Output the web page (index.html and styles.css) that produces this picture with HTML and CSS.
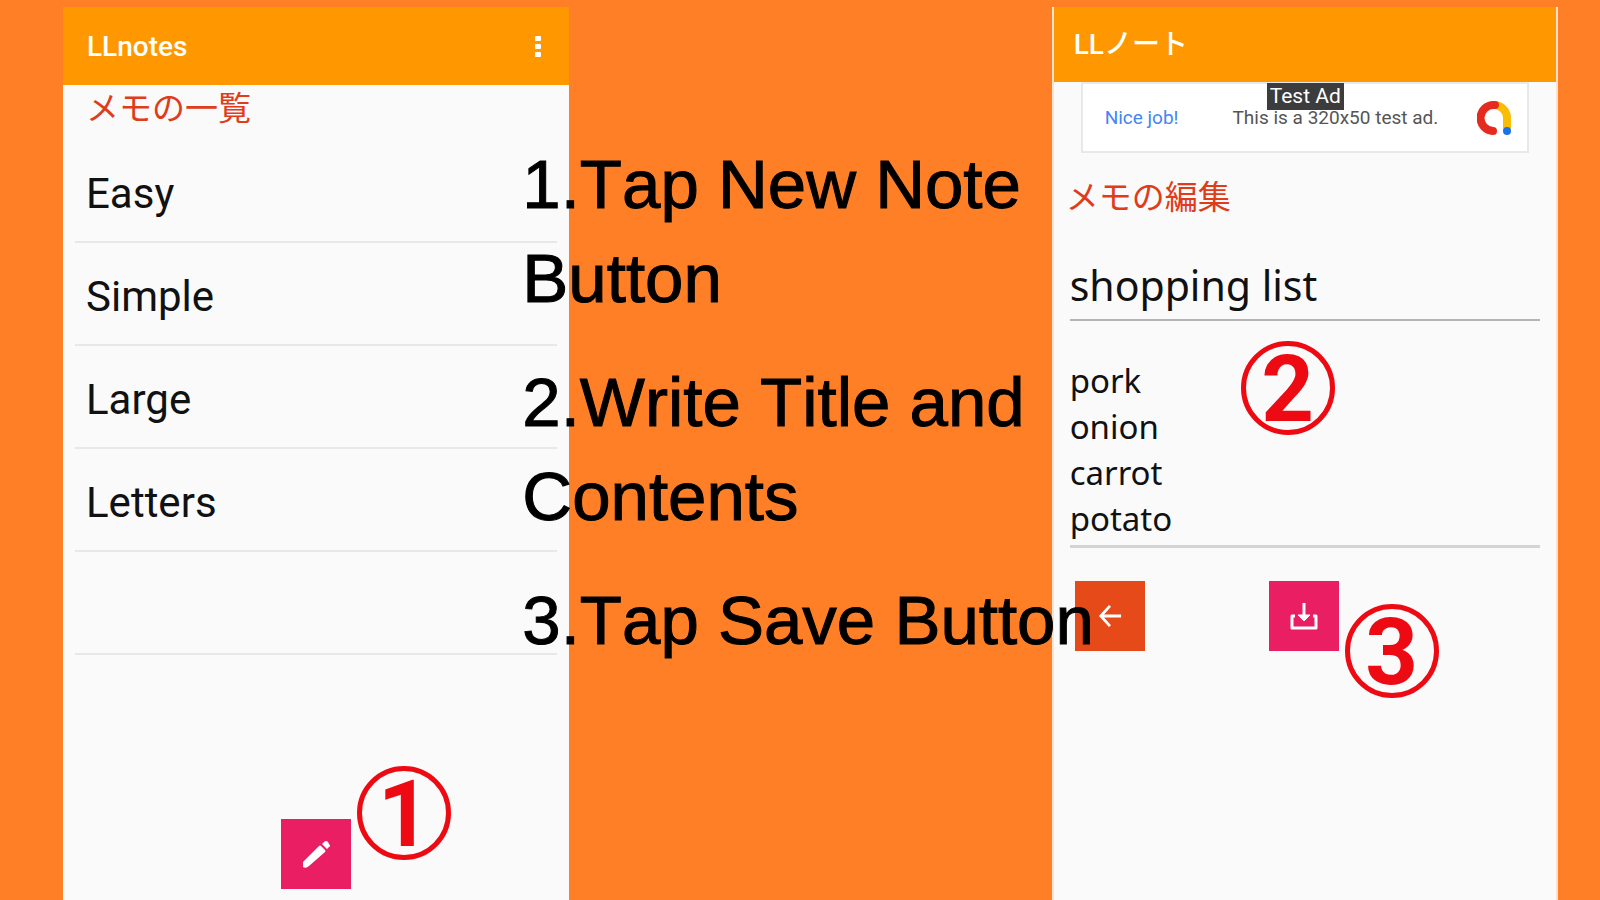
FILE: index.html
```html
<!DOCTYPE html>
<html lang="ja">
<head>
    <meta charset="UTF-8">
    <meta name="viewport" content="width=device-width, initial-scale=1.0">
    <title>LLnotes</title>
    <link rel="stylesheet" href="styles.css">
</head>
<body>

    <main class="page">
        <section class="phone">
            <header class="app-bar">
                <h1>LLnotes</h1>
                <button type="button" class="menu-btn" aria-label="Menu">
                    <svg width="6" height="22" viewBox="0 0 6 22" fill="#fff">
                        <rect x="0" y="0" width="6" height="5" rx="1"/>
                        <rect x="0" y="8" width="6" height="5" rx="1"/>
                        <rect x="0" y="16" width="6" height="5" rx="1"/>
                    </svg>
                </button>
            </header>
            <h2 class="list-title">メモの一覧</h2>
            <ul class="notes">
                <li><a href="#">Easy</a></li>
                <li><a href="#">Simple</a></li>
                <li><a href="#">Large</a></li>
                <li><a href="#">Letters</a></li>
                <li></li>
            </ul>
            <div class="new-note">
                <button type="button" class="icon-btn pink" aria-label="New note">
                    <svg width="32" height="32" viewBox="0 0 32 32" fill="#fff">
                        <path d="M3 24 L19 8 Q20 7 21 8 L25 12 Q26 13 25 14 L9 28 Q6 31 3 29 Z"/>
                        <path d="M22 6 L24 4 Q26 2 28 4 L29 6 Q31 8 29 9 L27 11 Z"/>
                    </svg>
                </button>
                <span class="step step-new">1</span>
            </div>
        </section>

        <ol class="guide">
            <li>1.Tap New Note Button</li>
            <li>2.Write Title and Contents</li>
            <li>3.Tap Save Button</li>
        </ol>

        <section class="phone phone-edit">
            <header class="app-bar">
                <h1>LLノート</h1>
            </header>
            <div class="ad">
                <span class="ad-label">Test Ad</span>
                <a href="#">Nice job!</a>
                <span class="ad-text">This is a 320x50 test ad.</span>
                <svg class="ad-logo" width="34" height="36" viewBox="0 0 34 36" fill="none" stroke-width="8" stroke-linecap="round">
                    <path d="M17 5 A13 13 0 0 1 30 18 V27" stroke="#fbbc04"/>
                    <path d="M18 5 H17 A13 13 0 0 0 16 31" stroke="#e52b20"/>
                    <circle cx="30" cy="31" r="4" fill="#1a73e8"/>
                </svg>
            </div>
            <form class="editor">
                <h2>メモの編集</h2>
                <input type="text" class="note-title" aria-label="Title" value="shopping list">
                <div class="note-body">
                    <textarea rows="4" aria-label="Contents">pork
onion
carrot
potato</textarea>
                    <span class="step step-write">2</span>
                </div>
                <div class="actions">
                    <button type="button" class="icon-btn red" aria-label="Back">
                        <svg width="24" height="24" viewBox="0 0 26 26" fill="none" stroke="#fff" stroke-width="3">
                            <path d="M25 13 H3 M13 2 L3 13 L13 24"/>
                        </svg>
                    </button>
                    <div class="save">
                        <button type="button" class="icon-btn pink" aria-label="Save">
                            <svg width="30" height="30" viewBox="0 0 30 30" fill="none" stroke="#fff" stroke-width="3" stroke-linejoin="round">
                                <path d="M6 15 H3 V27 H27 V15 H24"/>
                                <path d="M15 2 V17"/>
                                <path d="M9 14 L15 20 L21 14 Z" fill="#fff" stroke-width="1"/>
                            </svg>
                        </button>
                        <span class="step step-save">3</span>
                    </div>
                </div>
            </form>
        </section>
    </main>

</body>
</html>
```
FILE: styles.css
```css
* {
    box-sizing: border-box;
}
body {
    margin: 0;
    background-color: #ff7f27;
    font-family: Roboto, "Noto Sans CJK JP", sans-serif;
    color: #111;
}
h1, h2, ul, ol {
    margin: 0;
    padding: 0;
}
ul, ol {
    list-style: none;
}
.page {
    display: grid;
    grid-template-columns: 506fr 482fr 506fr;
    min-height: 100vh;
    padding: 7px 42px 0 63px;
}
.phone {
    display: flex;
    flex-direction: column;
    background-color: #fafafa;
}
.phone-edit {
    border: solid #fde3cf;
    border-width: 0 2px;
}
.app-bar {
    display: flex;
    justify-content: space-between;
    align-items: center;
    height: 78px;
    padding: 2px 24px 0;
    background-color: #ff9800;
}
.phone-edit .app-bar {
    height: 75px;
    padding: 0 20px;
}
.app-bar h1 {
    font-size: 28px;
    line-height: 32px;
    font-weight: 500;
    color: #fff;
}
.menu-btn {
    display: flex;
    padding: 4px;
    border: none;
    background: none;
    cursor: pointer;
}
h2 {
    font-size: 33px;
    line-height: 48px;
    font-weight: 400;
    color: #e03c1a;
}
.list-title {
    padding-left: 23px;
}

/* note list */
.notes {
    padding: 7px 12px 0;
}
.notes li {
    height: 103px;
    padding: 28px 11px 0;
    border-bottom: 2px solid #e8e8e8;
}
.notes a {
    font-size: 42px;
    line-height: 52px;
    color: #111;
    text-decoration: none;
}
.new-note {
    position: relative;
    margin: auto auto 11px;
}
.icon-btn {
    display: flex;
    justify-content: center;
    align-items: center;
    width: 70px;
    height: 70px;
    padding: 0;
    border: none;
    cursor: pointer;
}
.pink {
    background-color: #e91e63;
}
.red {
    background-color: #e64a19;
}

/* red step circles */
.step {
    position: absolute;
    width: 94px;
    height: 94px;
    border: 5px solid #ee0a12;
    border-radius: 50%;
    font-family: Roboto, sans-serif;
    font-size: 92px;
    line-height: 88px;
    font-weight: bold;
    text-align: center;
    color: #ee0a12;
}
.step-new {
    left: 76px;
    top: -53px;
}
.step-write {
    left: 171px;
    top: -17px;
}
.step-save {
    left: 76px;
    top: 23px;
}

/* instructions, run over both phones */
.guide {
    z-index: 1;
    margin: 0 -60px 0 -47px;
    padding-top: 131px;
    font-family: "Liberation Sans", sans-serif;
    font-size: 69px;
    line-height: 94px;
    font-kerning: none;
    color: #000;
    -webkit-text-stroke: 1px #000;
}
.guide li {
    margin-bottom: 30px;
}

/* ad banner */
.ad {
    position: relative;
    display: flex;
    align-items: center;
    height: 71px;
    margin: 0 27px;
    padding: 0 16px 0 22px;
    border: 2px solid #e6e8ea;
    background-color: #fff;
    font-size: 19px;
}
.ad a {
    color: #4285f4;
    text-decoration: none;
}
.ad-label {
    position: absolute;
    left: 184px;
    top: -1px;
    padding: 0 3px;
    background-color: #3c3c3c;
    font-size: 21px;
    line-height: 27px;
    color: #fff;
}
.ad-text {
    margin-left: 54px;
    color: #555;
}
.ad-logo {
    margin-left: auto;
}

/* note editor */
.editor {
    padding: 21px 16px 0;
}
.editor h2 {
    margin-left: -4px;
}
.note-title,
.note-body textarea {
    display: block;
    width: 100%;
    padding: 0;
    border: none;
    border-bottom: 2px solid #b4b4b4;
    border-radius: 0;
    background: none;
    font-family: "Noto Sans", sans-serif;
    color: #111;
    outline: none;
}
.note-title {
    height: 70px;
    margin-top: 29px;
    font-size: 41px;
}
.note-body {
    position: relative;
    margin-top: 37px;
}
.note-body textarea {
    height: 190px;
    border-bottom: 3px solid #d4d4d4;
    font-size: 33px;
    line-height: 46px;
    resize: none;
    overflow: hidden;
}
.actions {
    display: flex;
    gap: 124px;
    padding: 33px 5px 0;
}
.save {
    position: relative;
}
```
